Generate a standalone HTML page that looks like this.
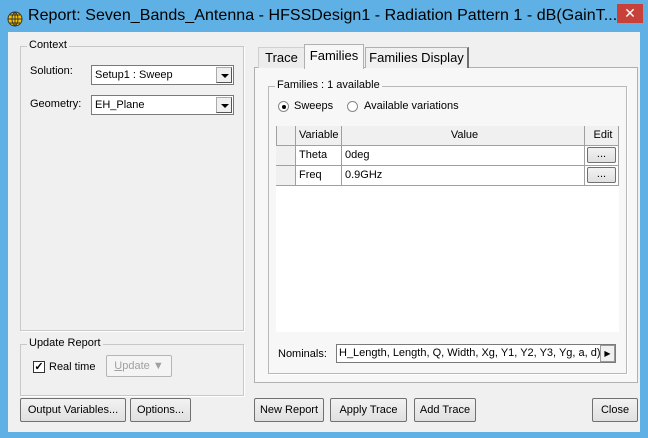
<!DOCTYPE html>
<html><head><style>
*{box-sizing:border-box;margin:0;padding:0}
body{width:648px;height:438px;overflow:hidden;background:#5eb0e5;font-family:"Liberation Sans",sans-serif;font-size:11px;color:#000;position:relative}
.a{position:absolute}
.body{left:8px;top:32px;width:632px;height:400px;background:#f0f0f0}
.grp{position:absolute;border:1px solid #c8c8c8;box-shadow:1px 1px 0 #fff}
.grp .lg{position:absolute;top:-8px;left:6px;background:#f0f0f0;padding:0 2px;font-size:11px}
.btn{position:absolute;height:24px;border:1px solid #707070;background:linear-gradient(#f2f2f2,#e0e0e0);font-size:11px;text-align:center;line-height:22px;border-radius:2px}
.cb{position:absolute;height:20px;background:#fff;border:1px solid #7a7a7a;font-size:11px;line-height:18px;padding-left:3px}
.cb .ar{position:absolute;right:1px;top:1px;width:16px;height:16px;background:#f0f0f0;border:1px solid #aaa;border-right-color:#555;border-bottom-color:#555}
.cb .ar:after{content:"";position:absolute;left:4px;top:6px;border-left:4px solid transparent;border-right:4px solid transparent;border-top:4px solid #000}
.cell{position:absolute;border-right:1px solid #a0a0a0;border-bottom:1px solid #a0a0a0;padding-left:3px;line-height:19px;height:20px;background:#fff}
.hd{background:#f0f0f0}
</style></head><body>
<div class="a" style="left:0;top:0;width:648px;height:32px;background:#5eb0e5"></div>
<svg class="a" style="left:7px;top:11px" width="16" height="16" viewBox="0 0 16 16"><circle cx="8" cy="8" r="7" fill="#f2c200" stroke="#333" stroke-width="1"/><path d="M8 1v14M1 8h14M3 4h10M3 12h10M8 1c-4 3-4 11 0 14M8 1c4 3 4 11 0 14" stroke="#333" fill="none" stroke-width="0.9"/></svg>
<div class="a" style="left:28px;top:7px;font-size:16px;letter-spacing:0.04px;color:#000;white-space:nowrap">Report: Seven_Bands_Antenna - HFSSDesign1 - Radiation Pattern 1 - dB(GainT...</div>
<div class="a" style="left:617px;top:4px;width:26px;height:19px;background:#c7403a;color:#fff;text-align:center;font-size:14px;line-height:18px;z-index:2">✕</div>
<div class="a body"></div>

<div class="grp" style="left:20px;top:46px;width:224px;height:285px"><span class="lg">Context</span></div>
<div class="a" style="left:30px;top:65px">Solution:</div>
<div class="cb" style="left:91px;top:65px;width:143px">Setup1 : Sweep<div class="ar"></div></div>
<div class="a" style="left:30px;top:98px">Geometry:</div>
<div class="cb" style="left:91px;top:95px;width:143px">EH_Plane<div class="ar"></div></div>

<div class="grp" style="left:20px;top:344px;width:224px;height:52px"><span class="lg">Update Report</span></div>
<div class="a" style="left:33px;top:361px;width:12px;height:12px;border:1px solid #333;background:#fff;font-size:11px;line-height:10px;text-align:center;font-weight:bold">✓</div>
<div class="a" style="left:49px;top:361px">Real time</div>
<div class="btn" style="left:106px;top:355px;width:66px;height:22px;color:#a0a0a0;border-color:#b5b5b5;background:#f4f4f4;line-height:20px"><u>U</u>pdate &#9660;</div>

<div class="a" style="left:254px;top:67px;width:384px;height:316px;background:#f7f7f7;border:1px solid #b0b0b0"></div>
<div class="a" style="left:258px;top:47px;width:47px;height:21px;background:#ececec;border:1px solid #d0d0d0;border-bottom:none;font-size:13px;text-align:center;line-height:20px">Trace</div>
<div class="a" style="left:304px;top:44px;width:60px;height:25px;background:#f7f7f7;border:1px solid #b0b0b0;border-bottom:none;font-size:13px;text-align:center;line-height:22px">Families</div>
<div class="a" style="left:365px;top:47px;width:104px;height:21px;background:#f0f0f0;border:1px solid #b0b0b0;border-right:2px solid #707070;border-bottom:none;font-size:13px;text-align:center;line-height:20px">Families Display</div>

<div class="grp" style="left:268px;top:86px;width:359px;height:288px;border-color:#b8b8b8"><span class="lg" style="background:#f7f7f7">Families : 1 available</span></div>
<div class="a" style="left:278px;top:101px;width:11px;height:11px;border-radius:50%;border:1px solid #888;background:#fff"><div class="a" style="left:3px;top:3px;width:4px;height:4px;border-radius:50%;background:#000"></div></div>
<div class="a" style="left:294px;top:100px">Sweeps</div>
<div class="a" style="left:347px;top:101px;width:11px;height:11px;border-radius:50%;border:1px solid #888;background:#fff"></div>
<div class="a" style="left:364px;top:100px">Available variations</div>

<div class="a" style="left:276px;top:126px;width:343px;height:206px;background:#fff"></div>
<div class="cell hd" style="left:276px;top:126px;width:20px;border-left:1px solid #a0a0a0"></div>
<div class="cell hd" style="left:296px;top:126px;width:46px">Variable</div>
<div class="cell hd" style="left:342px;top:126px;width:243px;text-align:center">Value</div>
<div class="cell hd" style="left:585px;top:126px;width:34px;text-align:center">Edit</div>
<div class="cell hd" style="left:276px;top:146px;width:20px"></div>
<div class="cell" style="left:296px;top:146px;width:46px">Theta</div>
<div class="cell" style="left:342px;top:146px;width:243px">0deg</div>
<div class="cell" style="left:585px;top:146px;width:34px"><div class="btn" style="left:2px;top:1px;width:29px;height:16px;line-height:12px">...</div></div>
<div class="cell hd" style="left:276px;top:166px;width:20px"></div>
<div class="cell" style="left:296px;top:166px;width:46px">Freq</div>
<div class="cell" style="left:342px;top:166px;width:243px">0.9GHz</div>
<div class="cell" style="left:585px;top:166px;width:34px"><div class="btn" style="left:2px;top:1px;width:29px;height:16px;line-height:12px">...</div></div>

<div class="a" style="left:278px;top:348px">Nominals:</div>
<div class="a" style="left:336px;top:344px;width:280px;height:19px;background:#fff;border:1px solid #7a7a7a;line-height:17px;padding-left:2px;white-space:nowrap;overflow:hidden">H_Length, Length, Q, Width, Xg, Y1, Y2, Y3, Yg, a, d)</div>
<div class="a" style="left:600px;top:345px;width:15px;height:17px;background:#f0f0f0;border:1px solid #999;font-size:8px;text-align:center;line-height:15px">&#9654;</div>

<div class="btn" style="left:20px;top:398px;width:106px">Output Variables...</div>
<div class="btn" style="left:130px;top:398px;width:61px">Options...</div>
<div class="btn" style="left:254px;top:398px;width:70px">New Report</div>
<div class="btn" style="left:330px;top:398px;width:77px">Apply Trace</div>
<div class="btn" style="left:414px;top:398px;width:62px">Add Trace</div>
<div class="btn" style="left:592px;top:398px;width:46px">Close</div>
</body></html>
